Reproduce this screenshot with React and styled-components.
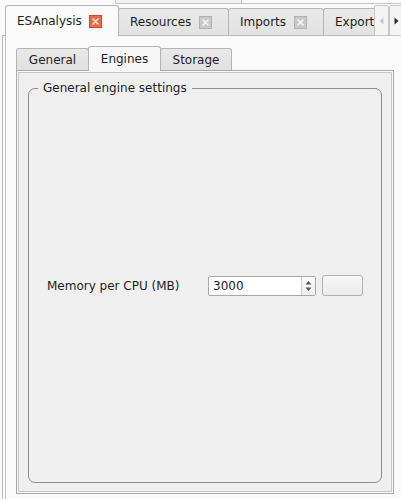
import React from 'react';
import styled, { createGlobalStyle } from 'styled-components';

const GlobalStyle = createGlobalStyle`
  html, body {
    margin: 0;
    padding: 0;
    background: #fafafa;
  }
  body {
    font-family: "DejaVu Sans", "Liberation Sans", sans-serif;
    font-size: 12px;
    color: #1e1e1e;
  }
`;

const outerTabs = [
  { label: 'ESAnalysis', width: 114, active: true },
  { label: 'Resources', width: 111 },
  { label: 'Imports', width: 96 },
  { label: 'Export', width: 100 }
];

const innerTabs = [
  { label: 'General', width: 73 },
  { label: 'Engines', width: 73, active: true },
  { label: 'Storage', width: 72 }
];

const CloseIcon = ({ active }) => (
  <svg width="13" height="13" viewBox="0 0 13 13">
    <rect
      x="0.5"
      y="0.5"
      width="12"
      height="12"
      fill={active ? '#e66c50' : '#c9c9c9'}
      stroke={active ? '#cc4a30' : '#b2b2b2'}
    />
    <path
      d="M4 4 L9 9 M9 4 L4 9"
      stroke={active ? '#ffe2da' : '#f5f5f5'}
      strokeWidth="1.6"
      strokeLinecap="round"
    />
  </svg>
);

const Arrow = ({ dir, color }) => (
  <svg width="5" height="8" viewBox="0 0 5 8">
    <path d={dir === 'left' ? 'M4.5 0.5 L0.5 4 L4.5 7.5 Z' : 'M0.5 0.5 L4.5 4 L0.5 7.5 Z'} fill={color} />
  </svg>
);

const SpinArrows = () => (
  <svg width="7" height="12" viewBox="0 0 7 12">
    <path d="M3.5 1 L6.5 4.5 L0.5 4.5 Z" fill="#555" />
    <path d="M3.5 11 L6.5 7.5 L0.5 7.5 Z" fill="#555" />
  </svg>
);

function App() {
  return (
    <Window>
      <GlobalStyle />
      <TopStrip>
        <TopSpacer />
        <TopBox />
        <TopRest />
      </TopStrip>

      <OuterTabBar>
        <OuterTabs>
          {outerTabs.map((tab, i) => (
            <OuterTab key={`otab-${i}`} $active={tab.active} $width={tab.width} $first={i === 0}>
              <span>{tab.label}</span>
              <CloseSlot>
                <CloseIcon active={tab.active} />
              </CloseSlot>
            </OuterTab>
          ))}
        </OuterTabs>
        <ScrollButtons>
          <ScrollButton>
            <Arrow dir="left" color="#c4c4c4" />
          </ScrollButton>
          <ScrollButton>
            <Arrow dir="right" color="#2a2a2a" />
          </ScrollButton>
        </ScrollButtons>
      </OuterTabBar>

      <OuterPane>
        <InnerTabBar>
          {innerTabs.map((tab, i) => (
            <InnerTab key={`itab-${i}`} $active={tab.active} $width={tab.width} $first={i === 0}>
              {tab.label}
            </InnerTab>
          ))}
        </InnerTabBar>
        <InnerPane>
          <GroupBox>
            <Legend>General engine settings</Legend>
            <GroupBody>
              <FormRow>
                <FieldLabel>Memory per CPU (MB)</FieldLabel>
                <SpinBox>
                  <SpinValue>3000</SpinValue>
                  <SpinButtons>
                    <SpinArrows />
                  </SpinButtons>
                </SpinBox>
                <EmptyButton />
              </FormRow>
            </GroupBody>
          </GroupBox>
        </InnerPane>
      </OuterPane>
    </Window>
  );
}

const Window = styled.div`
  width: 401px;
  height: 499px;
  overflow: hidden;
  background: #fafafa;
  display: flex;
  flex-direction: column;
`;

const TopStrip = styled.div`
  display: flex;
  height: 4px;
  flex: none;
`;

const TopSpacer = styled.div`
  width: 115px;
`;

const TopBox = styled.div`
  width: 125px;
  border: 1px solid #c4c4c4;
  border-top: none;
  background: #f2f2f2;
`;

const TopRest = styled.div`
  flex: 1;
  border-bottom: 1px solid #c4c4c4;
`;

const OuterTabBar = styled.div`
  position: relative;
  z-index: 1;
  display: flex;
  height: 32px;
  flex: none;
  padding-left: 5px;
`;

const OuterTabs = styled.div`
  flex: 1;
  display: flex;
  align-items: flex-end;
  overflow: hidden;
`;

const OuterTab = styled.div`
  flex: none;
  box-sizing: border-box;
  width: ${(p) => p.$width}px;
  height: ${(p) => (p.$active ? 31 : 27)}px;
  margin-bottom: ${(p) => (p.$active ? 0 : 1)}px;
  margin-left: ${(p) => (p.$first ? 0 : -1)}px;
  display: flex;
  align-items: center;
  padding: 0 16px 0 11px;
  border: 1px solid #b4b4b4;
  border-bottom: none;
  border-radius: 3px 3px 0 0;
  background: ${(p) => (p.$active ? '#fafafa' : 'linear-gradient(#e9e9e9, #e2e2e2)')};
  position: relative;
  z-index: ${(p) => (p.$active ? 2 : 1)};
  white-space: nowrap;
`;

const CloseSlot = styled.span`
  margin-left: auto;
  display: flex;
`;

const ScrollButtons = styled.div`
  width: 27px;
  display: flex;
  align-items: flex-start;
  padding-top: 1px;
`;

const ScrollButton = styled.div`
  flex: none;
  box-sizing: border-box;
  width: 15px;
  height: 31px;
  border: 1px solid #c8c8c8;
  border-radius: 2px;
  background: #f4f4f4;
  display: flex;
  align-items: center;
  justify-content: center;
`;

const OuterPane = styled.div`
  flex: 1;
  margin-top: -1px;
  margin-left: 2px;
  padding: 10px 0 0 13px;
  border: 1px solid #b8b8b8;
  border-right: none;
  border-bottom: none;
  background: #fafafa;
  box-shadow: inset 2px 0 0 0 #fafafa, inset 3px 0 0 0 #c4c4c4;
  display: flex;
  flex-direction: column;
  width: 420px;
`;

const InnerTabBar = styled.div`
  position: relative;
  z-index: 1;
  display: flex;
  align-items: flex-end;
  height: 25px;
  flex: none;
`;

const InnerTab = styled.div`
  flex: none;
  box-sizing: border-box;
  width: ${(p) => p.$width}px;
  height: ${(p) => (p.$active ? 25 : 22)}px;
  margin-bottom: ${(p) => (p.$active ? 0 : 1)}px;
  margin-left: ${(p) => (p.$first ? 0 : -1)}px;
  display: flex;
  align-items: center;
  justify-content: center;
  border: 1px solid #b4b4b4;
  border-bottom: none;
  border-radius: 3px 3px 0 0;
  background: ${(p) => (p.$active ? '#f7f7f7' : 'linear-gradient(#e8e8e8, #e1e1e1)')};
  position: relative;
  z-index: ${(p) => (p.$active ? 2 : 1)};
`;

const InnerPane = styled.div`
  box-sizing: border-box;
  width: 378px;
  height: 424px;
  margin-top: -1px;
  padding: 10px 11px 10px 11px;
  border: 1px solid #a9a9a9;
  background: #efefef;
  box-shadow: inset 0 0 0 1px #f9f9f9, inset 0 0 0 2px #c6c6c6;
  display: flex;
  flex-direction: column;
`;

const GroupBox = styled.fieldset`
  flex: 1;
  min-width: 0;
  margin: 0;
  padding: 0;
  border: 1px solid #8c8c8c;
  border-radius: 7px;
`;

const Legend = styled.legend`
  margin-left: 9px;
  padding: 0 5px;
  line-height: 14px;
  font-size: 12px;
`;

const GroupBody = styled.div`
  padding-top: 180px;
`;

const FormRow = styled.div`
  display: flex;
  align-items: center;
  padding-left: 18px;
`;

const FieldLabel = styled.span`
  width: 161px;
  flex: none;
`;

const SpinBox = styled.div`
  box-sizing: border-box;
  width: 108px;
  height: 20px;
  display: flex;
  background: #ffffff;
  border: 1px solid #a8a8a8;
  border-radius: 2px;
`;

const SpinValue = styled.span`
  flex: 1;
  padding-left: 4px;
  display: flex;
  align-items: center;
`;

const SpinButtons = styled.div`
  width: 13px;
  border-left: 1px solid #cdcdcd;
  background: linear-gradient(#fafafa, #eeeeee);
  display: flex;
  align-items: center;
  justify-content: center;
`;

const EmptyButton = styled.div`
  box-sizing: border-box;
  width: 41px;
  height: 21px;
  margin-left: 6px;
  border: 1px solid #b0b0b0;
  border-radius: 3px;
  background: linear-gradient(#f7f7f7, #ebebeb);
`;

export default App;
